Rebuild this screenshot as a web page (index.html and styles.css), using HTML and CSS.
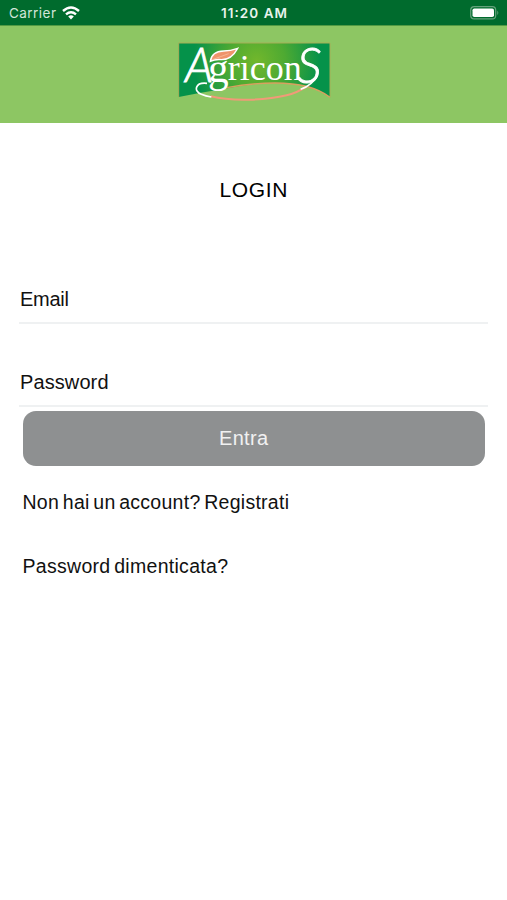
FILE: index.html
```html
<!DOCTYPE html>
<html lang="it">
<head>
<meta charset="utf-8">
<meta name="viewport" content="width=device-width, initial-scale=1">
<title>Login</title>
<link rel="stylesheet" href="styles.css">
</head>
<body>
<div class="status">
  <div class="carrier"><svg class="label" width="47" height="20"><text x="0" y="15" textLength="47">Carrier</text></svg>
    <svg class="wifi" width="18" height="14" viewBox="0 0 18 14" fill="none" stroke="#fff" stroke-width="2.4"><path d="M1 5Q9-2 17 5M4 8.3Q9 4 14 8.3"/><path d="M6.2 10.5Q9 8.2 11.8 10.5L9 13.4Z" fill="#fff" stroke="none"/></svg>
  </div>
  <svg class="label clock" width="66" height="20"><text x="0" y="15" textLength="66">11:20 AM</text></svg>
  <svg class="battery" width="30" height="14" viewBox="0 0 30 14"><rect x=".7" y=".7" width="25" height="12.2" rx="3.5" fill="none" stroke="#65a27c" stroke-width="1.2"/><rect x="2.5" y="2.5" width="21.5" height="8.6" rx="1.8" fill="#fff"/><path d="M27.3 4.5Q29.3 6.8 27.3 9Z" fill="#65a27c"/></svg>
</div>
<header class="header">
  <svg class="logo" viewBox="24 24 459 180">
    <defs>
      <radialGradient id="field" gradientUnits="userSpaceOnUse" cx="260" cy="80" r="190"><stop offset="0" stop-color="#72b72c"/><stop offset=".45" stop-color="#4eaa32"/><stop offset="1" stop-color="#05924a"/></radialGradient>
    </defs>
    <path d="M26 27H480V190Q425 147 315 147Q245 147 160 165Q90 176 26 189Z" fill="url(#field)"/>
    <path d="M480 190V27H26V189" fill="none" stroke="#a5ae57" stroke-width="3"/>
    <path d="M170 161Q245 147 315 147Q425 147 480 190" fill="none" stroke="#d9a05f" stroke-width="4"/>
    <path d="M122 187C190 204 292 198 350 184Q384 175 410 157" fill="none" stroke="#f19a78" stroke-width="6"/>
    <path d="M111 148C76 144 69 171 94 181Q107 187 124 189M392 166Q426 154 443 124" fill="none" stroke="#fff" stroke-width="5"/>
    <text class="wordmark"><tspan class="slant" x="45" y="144" font-size="140">A</tspan><tspan x="114" y="143" font-size="124">g</tspan><tspan x="173" y="139" font-size="108">ricon</tspan><tspan class="slant" x="380" y="148" font-size="150">S</tspan></text>
    <path d="M121 82Q125 52 161 51Q181 51 203 43Q185 77 155 77Q136 75 121 82Z" fill="#ef936b" stroke="#fff" stroke-width="4"/>
    <path d="M127 77Q154 67 176 59" fill="none" stroke="#f9c5a7" stroke-width="2"/>
  </svg>
</header>
<main class="content">
  <h1 class="title"><svg width="68" height="28"><text x="-.5" y="21" textLength="68">LOGIN</text></svg></h1>
  <div class="field"><svg width="49" height="28"><text x="-1" y="20" textLength="49">Email</text></svg></div>
  <div class="field password"><svg width="89" height="28"><text x="-1" y="20" textLength="88.5">Password</text></svg></div>
  <button class="submit"><svg width="49" height="28"><text x="-1" y="21" textLength="49">Entra</text></svg></button>
  <a class="link"><svg width="267" height="28"><text x="-.5" y="21" textLength="266.5">Non hai un account? Registrati</text></svg></a>
  <a class="link forgot"><svg width="206" height="28"><text x="-.5" y="20.5" textLength="205.5">Password dimenticata?</text></svg></a>
</main>
</body>
</html>
```

FILE: styles.css
```css
* { box-sizing: border-box; }
body { margin: 0; min-height: 900px; background: #fff; color: #111; font-family: "Liberation Sans", Arial, sans-serif; }
svg { display: block; overflow: visible; flex: none; }
text { fill: currentColor; }
.status { height: 26px; padding: 3px 7px 0 9px; display: grid; grid-template-columns: 1fr auto 1fr; align-items: start; background: #006b2d; border-bottom: 1px solid #529a43; color: #fff; font-family: Inter, "Liberation Sans", sans-serif; font-size: 13.5px; }
.carrier { display: flex; gap: 6px; color: #d2e5d9; }
.label text { dominant-baseline: alphabetic; }
.wifi { margin-top: 3px; }
.clock { font-weight: 600; color: #e8f3ec; margin-right: 2px; }
.battery { justify-self: end; margin-top: 3px; }
.header { height: 97px; display: flex; justify-content: center; padding: 16px 0 0 1px; background: #8dc663; }
.logo { width: 153px; height: 60px; }
.wordmark { font-family: "Liberation Serif", serif; color: #fff; }
.slant { font-family: Lato, "Liberation Sans", sans-serif; font-style: italic; font-weight: 300; stroke: #fff; stroke-width: 2.5px; }
.content { padding: 53px 19px 0; font-size: 20px; }
.title { margin: 0; display: flex; justify-content: center; font-size: 21px; font-weight: 400; color: #000; }
.field { height: 38px; margin-top: 82px; padding-left: 2px; border-bottom: 2px solid #eff1f2; }
.password { margin-top: 45px; }
.submit { width: 462px; height: 55px; margin: 4px 0 0 4px; padding: 0 0 1px; display: flex; align-items: center; justify-content: center; border: 0; border-radius: 13px; background: #8e9091; color: #f1f1f1; font: inherit; }
.submit svg { margin-right: 20px; }
.link { display: block; margin: 22px 0 0 4px; font-size: 19.5px; word-spacing: -2px; }
.forgot { margin-top: 36px; }
```
